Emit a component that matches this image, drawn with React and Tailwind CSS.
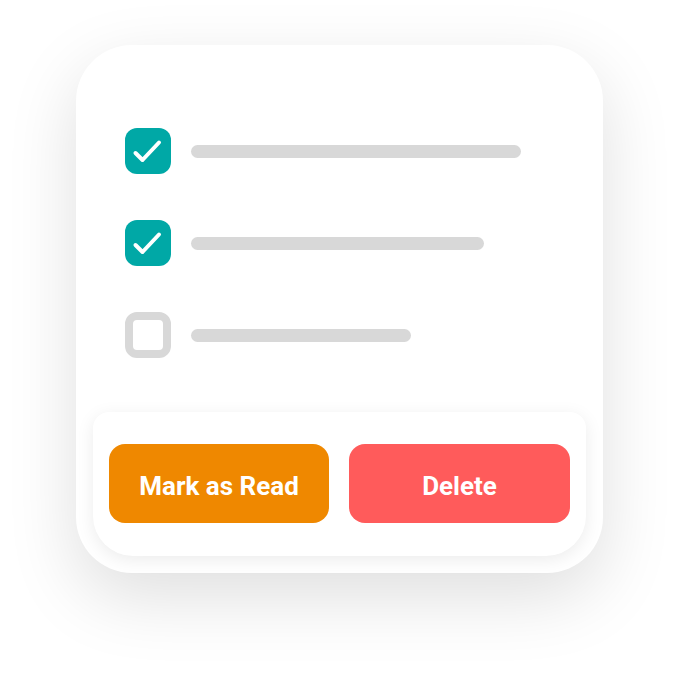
import React from 'react';

function CheckBox({ checked }) {
  if (!checked) {
    return (
      <div className="w-[46px] h-[46px] rounded-[12px] border-[8px] border-[#d8d8d8] bg-white flex-shrink-0" />
    );
  }
  return (
    <div className="w-[46px] h-[46px] rounded-[12px] bg-[#00a8a6] flex items-center justify-center flex-shrink-0">
      <svg width="46" height="46" viewBox="0 0 46 46" fill="none">
        <polyline points="10.5,25 17.5,32 34,14.5" stroke="#fff" strokeWidth="4" strokeLinecap="round" strokeLinejoin="round" />
      </svg>
    </div>
  );
}

const rows = [
  { checked: true, width: 'w-[330px]' },
  { checked: true, width: 'w-[293px]' },
  { checked: false, width: 'w-[220px]' },
];

export default function App() {
  return (
    <div className="w-[680px] h-[680px] bg-white pt-[45px] pl-[76px]" style={{ fontFamily: 'Roboto, "Liberation Sans", sans-serif' }}>
      <div className="w-[527px] h-[528px] bg-white rounded-[56px] shadow-[0_24px_70px_rgba(0,0,0,0.13)] flex flex-col">
        <div className="flex flex-col gap-[46px] pt-[83px] pl-[49px]">
          {rows.map((row, i) => (
            <div key={i} className="flex items-center gap-[20px]">
              <CheckBox checked={row.checked} />
              <div className={`${row.width} h-[13px] rounded-full bg-[#d8d8d8]`} />
            </div>
          ))}
        </div>
        <div className="mt-auto mx-[17px] mb-[17px] h-[144px] bg-white rounded-t-[16px] rounded-b-[40px] shadow-[0_4px_18px_rgba(0,0,0,0.08)] flex gap-[20px] px-[16px] pt-[32px]">
          <button className="w-[220px] h-[79px] pt-[5px] rounded-[16px] bg-[#ef8800] text-white text-[26px] font-bold">
            Mark as Read
          </button>
          <button className="w-[221px] h-[79px] pt-[5px] rounded-[16px] bg-[#ff5b5b] text-white text-[26px] font-bold">
            Delete
          </button>
        </div>
      </div>
    </div>
  );
}
